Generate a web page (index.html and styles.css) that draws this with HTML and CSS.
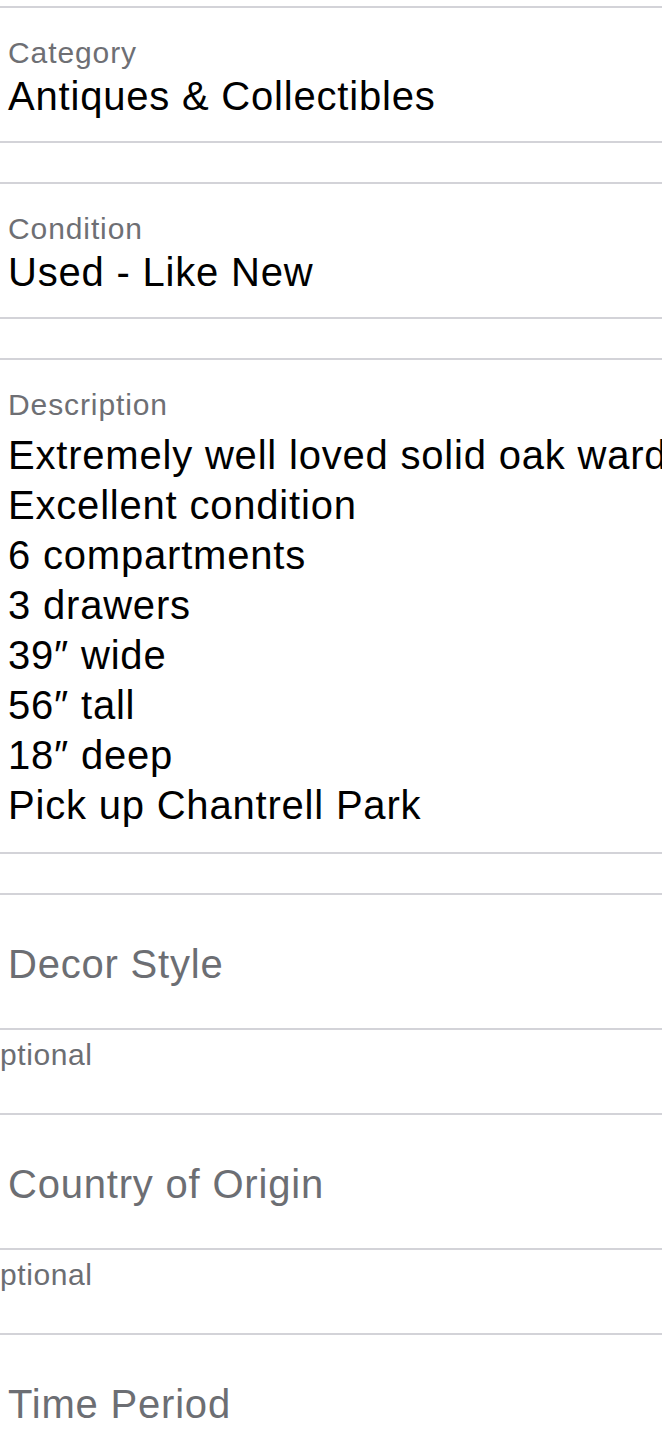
FILE: index.html
```html
<!DOCTYPE html>
<html lang="en">
<head>
<meta charset="utf-8">
<title>Listing details</title>
<link rel="stylesheet" href="styles.css">
</head>
<body>
<div class="page">
  <div class="top-space"></div>
  <div class="rule"></div>
  <section class="field">
    <div class="label">Category</div>
    <div class="value">Antiques &amp; Collectibles</div>
  </section>
  <div class="rule"></div>
  <div class="gap"></div>
  <div class="rule"></div>
  <section class="field">
    <div class="label">Condition</div>
    <div class="value">Used - Like New</div>
  </section>
  <div class="rule"></div>
  <div class="gap"></div>
  <div class="rule"></div>
  <section class="field field-desc">
    <div class="label">Description</div>
    <div class="value value-multi">Extremely well loved solid oak wardrobe
Excellent condition
6 compartments
3 drawers
39″ wide
56″ tall
18″ deep
Pick up Chantrell Park</div>
  </section>
  <div class="rule"></div>
  <div class="gap"></div>
  <div class="rule"></div>
  <section class="input">
    <div class="placeholder">Decor Style</div>
  </section>
  <div class="rule"></div>
  <section class="helper">
    <div class="helper-text">Optional</div>
  </section>
  <div class="rule"></div>
  <section class="input">
    <div class="placeholder">Country of Origin</div>
  </section>
  <div class="rule"></div>
  <section class="helper">
    <div class="helper-text">Optional</div>
  </section>
  <div class="rule"></div>
  <section class="input">
    <div class="placeholder">Time Period</div>
  </section>
</div>
</body>
</html>
```

FILE: styles.css
```css
html, body {
  margin: 0;
  padding: 0;
  background: #ffffff;
}

body {
  font-family: "Liberation Sans", Arial, sans-serif;
  color: #000000;
}

.page {
  width: 662px;
  overflow: hidden;
  display: flex;
  flex-direction: column;
}

.top-space {
  height: 6px;
}

.rule {
  height: 2px;
  background: #d3d3d8;
  flex: none;
}

.gap {
  height: 39px;
  flex: none;
}

.field {
  padding: 27px 0 20px 8px;
  overflow: hidden;
}

.field-desc {
  padding-bottom: 22px;
}

.label {
  font-size: 30px;
  line-height: 36px;
  letter-spacing: 0.9px;
  color: #6e6f74;
  white-space: nowrap;
}

.value {
  font-size: 40px;
  line-height: 50px;
  letter-spacing: 0.8px;
  color: #000000;
  white-space: nowrap;
}

.value-multi {
  white-space: pre;
  padding-top: 7px;
}

.input {
  height: 133px;
  padding-left: 8px;
  display: flex;
  align-items: center;
  overflow: hidden;
}

.placeholder {
  font-size: 40px;
  line-height: 50px;
  letter-spacing: 0.8px;
  color: #6c6e73;
  white-space: nowrap;
  padding-top: 4px;
}

.helper {
  height: 83px;
  overflow: hidden;
}

.helper-text {
  font-size: 30px;
  line-height: 36px;
  letter-spacing: 0.6px;
  color: #6c6e73;
  white-space: nowrap;
  margin-left: -24px;
  padding-top: 7px;
}
```
